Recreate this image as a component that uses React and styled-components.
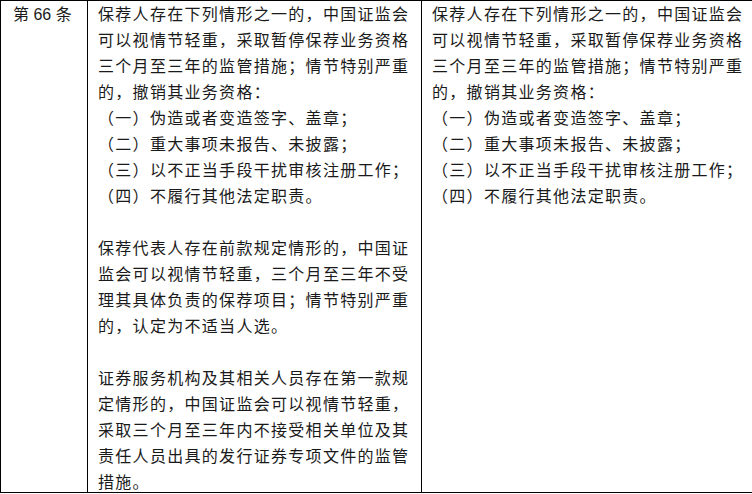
import React from "react";
import styled, { createGlobalStyle } from "styled-components";

const Global = createGlobalStyle`
  html, body { margin: 0; padding: 0; background: #fff; }
  body { font-family: "Liberation Sans", "Noto Sans CJK SC", sans-serif; color: #1a1a1a; }
`;

const Table = styled.table`
  border-collapse: collapse;
  width: 752px;
  table-layout: fixed;
`;

const Cell = styled.td`
  border: 1px solid #000;
  vertical-align: top;
  padding: 1px 4px 0 ${(p) => p.$pl || 10}px;
  font-size: 16px;
  line-height: 26px;
  letter-spacing: ${(p) => (p.$label ? "0" : "1.3px")};
`;

const CellBody = styled.div`
  height: 490px;
  overflow: visible;
`;

const Para = styled.div`
  & + & { margin-top: 26px; }
`;

const Line = styled.div``;

const left = {
  intro:
    "保荐人存在下列情形之一的，中国证监会可以视情节轻重，采取暂停保荐业务资格三个月至三年的监管措施；情节特别严重的，撤销其业务资格：",
  items: [
    "（一）伪造或者变造签字、盖章；",
    "（二）重大事项未报告、未披露；",
    "（三）以不正当手段干扰审核注册工作；",
    "（四）不履行其他法定职责。",
  ],
};

const extra = [
  "保荐代表人存在前款规定情形的，中国证监会可以视情节轻重，三个月至三年不受理其具体负责的保荐项目；情节特别严重的，认定为不适当人选。",
  "证券服务机构及其相关人员存在第一款规定情形的，中国证监会可以视情节轻重，采取三个月至三年内不接受相关单位及其责任人员出具的发行证券专项文件的监管措施。",
];

function Clause({ withExtra }) {
  return (
    <CellBody>
      <Para>
        <Line>{left.intro}</Line>
        {left.items.map((t) => (
          <Line key={t}>{t}</Line>
        ))}
      </Para>
      {withExtra && extra.map((t) => <Para key={t}>{t}</Para>)}
    </CellBody>
  );
}

export default function App() {
  return (
    <>
      <Global />
      <Table>
        <colgroup>
          <col style={{ width: 87 }} />
          <col style={{ width: 334 }} />
          <col style={{ width: 331 }} />
        </colgroup>
        <tbody>
          <tr>
            <Cell $label $pl={12}>
              <CellBody>第 66 条</CellBody>
            </Cell>
            <Cell>
              <Clause withExtra />
            </Cell>
            <Cell>
              <Clause />
            </Cell>
          </tr>
        </tbody>
      </Table>
    </>
  );
}
